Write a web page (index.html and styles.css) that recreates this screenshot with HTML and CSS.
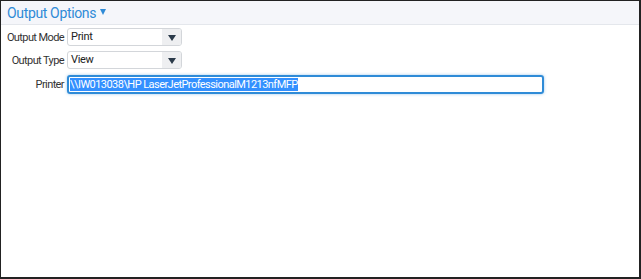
FILE: index.html
```html
<!DOCTYPE html>
<html lang="en">
  <head>
    <meta charset="UTF-8" />
    <title>Output Options</title>
    <link rel="stylesheet" href="styles.css">
  </head>
  <body>
    <div class="frame">
      <div class="header">
        <span class="title">Output Options</span>
        <span class="caret"></span>
      </div>

      <div class="form">
        <label class="label">Output Mode</label>
        <div class="select">
          <span class="select-value">Print</span>
          <span class="select-arrow"><span class="tri"></span></span>
        </div>

        <label class="label">Output Type</label>
        <div class="select">
          <span class="select-value">View</span>
          <span class="select-arrow"><span class="tri"></span></span>
        </div>

        <label class="label">Printer</label>
        <div class="text-input">
          <span class="selected">\\IW013038\HP LaserJetProfessionalM1213nfMFP</span>
        </div>
      </div>
    </div>
  </body>
</html>
```

FILE: styles.css
```css
body {
  margin: 0;
  font-family: Roboto, Arial, sans-serif;
  background: #fff;
}
.frame {
  box-sizing: border-box;
  width: 641px;
  height: 279px;
  border: 1px solid #222;
  border-right-width: 2px;
  border-bottom-width: 2px;
}
.header {
  height: 23px;
  background-color: #f5f6fa;
  border-bottom: 1px solid #e4e7ec;
  padding-left: 6px;
  display: flex;
  align-items: center;
  color: #2f8bd7;
}
.title {
  font-size: 14px;
  letter-spacing: -0.35px;
}
.caret {
  width: 0;
  height: 0;
  border-left: 3.5px solid transparent;
  border-right: 3.5px solid transparent;
  border-top: 6px solid #2f8bd7;
  margin-left: 4px;
  margin-top: -2px;
}
.form {
  display: grid;
  grid-template-columns: 63px auto;
  column-gap: 3px;
  row-gap: 5px;
  padding-top: 3px;
  align-items: center;
  justify-items: start;
}
.label {
  justify-self: end;
  white-space: nowrap;
  font-size: 11px;
  letter-spacing: -0.6px;
  color: #333;
}
.select {
  box-sizing: border-box;
  width: 115px;
  height: 18px;
  border: 1px solid #d3d6da;
  border-radius: 3px;
  display: flex;
  font-size: 11px;
  letter-spacing: -0.3px;
  color: #222;
  overflow: hidden;
}
.select-value {
  flex: 1;
  padding-left: 3px;
  line-height: 16px;
}
.select-arrow {
  width: 19px;
  background-color: #eeeff1;
  display: flex;
  align-items: center;
  justify-content: center;
}
.tri {
  width: 0;
  height: 0;
  border-left: 4px solid transparent;
  border-right: 4px solid transparent;
  border-top: 6px solid #2b3a4a;
  margin-top: 2px;
}
.text-input {
  box-sizing: border-box;
  width: 477px;
  height: 19px;
  margin-top: 1px;
  border: 2px solid #2f8bd7;
  border-radius: 3px;
  box-shadow: 0 0 3px rgba(47, 139, 215, 0.5);
  font-size: 11px;
  letter-spacing: -0.55px;
  line-height: 13px;
  padding-left: 1px;
  display: flex;
  align-items: center;
}
.selected {
  background-color: #3390ff;
  color: #fff;
}
```
